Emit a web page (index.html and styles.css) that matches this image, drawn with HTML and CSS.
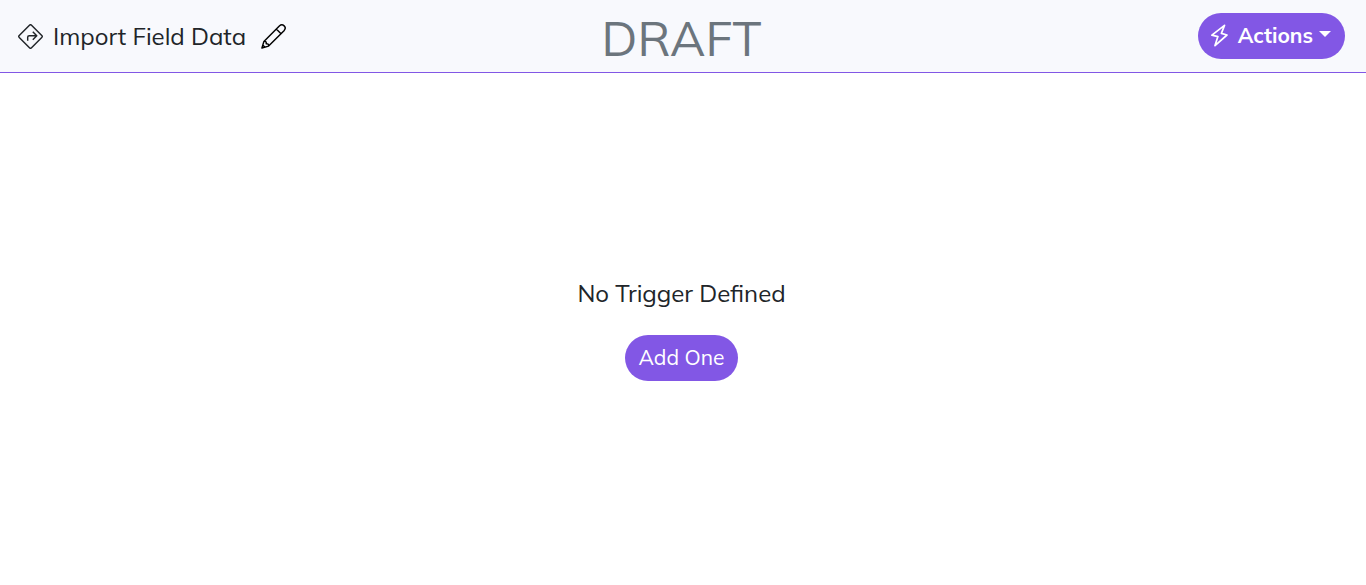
FILE: index.html
```html
<!DOCTYPE html>
<html lang="en">
<head>
<meta charset="utf-8">
<title>Import Field Data</title>
<meta name="viewport" content="width=device-width, initial-scale=1">
<link rel="stylesheet" href="styles.css">
</head>
<body>
<header class="topbar">
  <div class="flow-name">
    <svg class="icon" viewBox="0 0 24 24" aria-hidden="true"><path d="M11 1.2Q12 .2 13 1.2L22.8 11Q23.8 12 22.8 13L13 22.8Q12 23.8 11 22.8L1.2 13Q.2 12 1.2 11ZM9.3 16v-3.2q0-1.5 1.5-1.5h7M14.2 7.4l3.8 3.9-3.8 3.8"/></svg>
    <span class="flow-title">Import Field Data</span>
    <button class="edit" type="button" aria-label="Edit name">
      <svg class="icon" viewBox="0 0 24 24" aria-hidden="true"><path d="M.9 23.1L2.8 16.7 17.6 1.9Q20 -.2 22.2 1.8T22.1 6.4L7.3 21.2ZM14.7 4.8l4.5 4.5M2.8 16.7q2.6-.5 2.2 2.3 2.7-.4 2.3 2.2M1.9 20.4l1.7 1.7"/></svg>
    </button>
  </div>
  <h1 class="status">DRAFT</h1>
  <button class="btn actions" type="button" aria-haspopup="true">
    <svg class="bolt" viewBox="0 0 18 24" aria-hidden="true"><path d="M14.5 1.4L1.9 11.2 7.9 12.6 5 21.6 17 11 11.4 9.4Z"/></svg>
    <span>Actions</span>
    <svg class="caret" viewBox="0 0 12 6" aria-hidden="true"><path d="M0 0h12L6 6z"/></svg>
  </button>
</header>
<main class="empty">
  <p class="message">No Trigger Defined</p>
  <button class="btn" type="button">Add One</button>
</main>
</body>
</html>
```
FILE: styles.css
```css
* { box-sizing: border-box; }
body {
  margin: 0;
  min-height: 100vh;
  display: flex;
  flex-direction: column;
  background: #fff;
  color: #212529;
  font-family: Mulish, Nunito, "Open Sans", sans-serif;
  font-size: 24px;
  font-weight: 400;
  line-height: 36px;
}
.topbar {
  display: grid;
  grid-template-columns: 1fr auto 1fr;
  align-items: center;
  padding: 13px 21px 13px 18px;
  background: #f8f9fd;
  border-bottom: 1px solid #8257e5;
}
.flow-name { display: flex; align-items: center; gap: 10px; }
.icon {
  display: block;
  width: 25px;
  height: 25px;
  fill: none;
  stroke: currentColor;
  stroke-width: 1.4;
  stroke-linejoin: round;
}
.edit {
  margin-left: 5px;
  padding: 0;
  border: 0;
  background: none;
  color: #000;
}
.status {
  margin: 0;
  padding-top: 5px;
  color: #6c757d;
  font-size: 48px;
  font-weight: 400;
  line-height: 41px;
}
.btn {
  height: 46px;
  padding: 0 14px 2px;
  border: 0;
  border-radius: 23px;
  background: #8257e5;
  color: #fff;
  font: inherit;
  font-size: 21px;
  line-height: 32px;
}
.actions {
  justify-self: end;
  display: flex;
  align-items: center;
  padding: 0 14px 2px 12px;
  font-weight: 700;
}
.bolt {
  width: 18px;
  height: 24px;
  margin: 1px 10px 0 0;
  fill: none;
  stroke: currentColor;
  stroke-width: 1.7;
  stroke-linejoin: round;
}
.caret { width: 12px; height: 6px; margin: 0 0 2px 6px; fill: currentColor; }
.empty {
  flex: 1;
  display: flex;
  flex-direction: column;
  align-items: center;
  justify-content: center;
  gap: 24px;
  padding: 0 3px 3px 0;
}
.message { margin: 0; }
```
